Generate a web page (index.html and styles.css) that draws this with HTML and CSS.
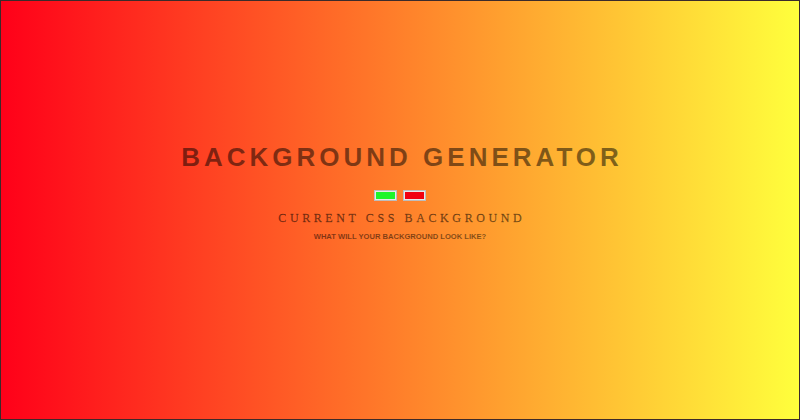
FILE: index.html
```html
<!DOCTYPE html>
<html>
<head>
<meta charset="utf-8">
<title>Background Generator</title>
<link rel="stylesheet" href="styles.css">
</head>
<body>
<main class="page">
  <h1 class="title">BACKGROUND GENERATOR</h1>
  <div class="pickers">
    <span class="swatch swatch-green"></span>
    <span class="swatch swatch-red"></span>
  </div>
  <h2 class="current">CURRENT CSS BACKGROUND</h2>
  <h3 class="question">WHAT WILL YOUR BACKGROUND LOOK LIKE?</h3>
</main>
</body>
</html>
```

FILE: styles.css
```css
html, body {
  margin: 0;
  padding: 0;
  height: 100%;
}
body {
  background: #333;
}
.page {
  box-sizing: border-box;
  height: 420px;
  width: 800px;
  border: 1px solid #3b2b2b;
  background: linear-gradient(to right, #ff0019, #ffff3c);
  display: flex;
  flex-direction: column;
  align-items: center;
  padding-top: 142px;
  color: rgba(0, 0, 0, 0.5);
}
.title {
  margin: 0;
  font-family: "Liberation Sans", Arial, sans-serif;
  font-weight: bold;
  font-size: 26px;
  line-height: 28px;
  letter-spacing: 4px;
  margin-right: -4px;
}
.pickers {
  display: flex;
  gap: 6px;
  margin-top: 19px;
}
.swatch {
  display: block;
  width: 19px;
  height: 7px;
  border: 2px solid #e8e8e8;
  outline: 1px solid #bdbdbd;
  outline-offset: -1px;
}
.swatch-green { background: #1df52a; }
.swatch-red { background: #f2000f; }
.current {
  margin: 10px 0 0;
  font-family: "Liberation Serif", "Times New Roman", serif;
  font-weight: normal;
  font-size: 12px;
  line-height: 14px;
  letter-spacing: 3.6px;
  margin-right: -3.6px;
  -webkit-text-stroke: 0.3px rgba(0, 0, 0, 0.4);
}
.question {
  margin: 7px 0 0;
  font-family: "Liberation Sans", Arial, sans-serif;
  font-weight: bold;
  font-size: 7.6px;
  line-height: 10px;
}
```
